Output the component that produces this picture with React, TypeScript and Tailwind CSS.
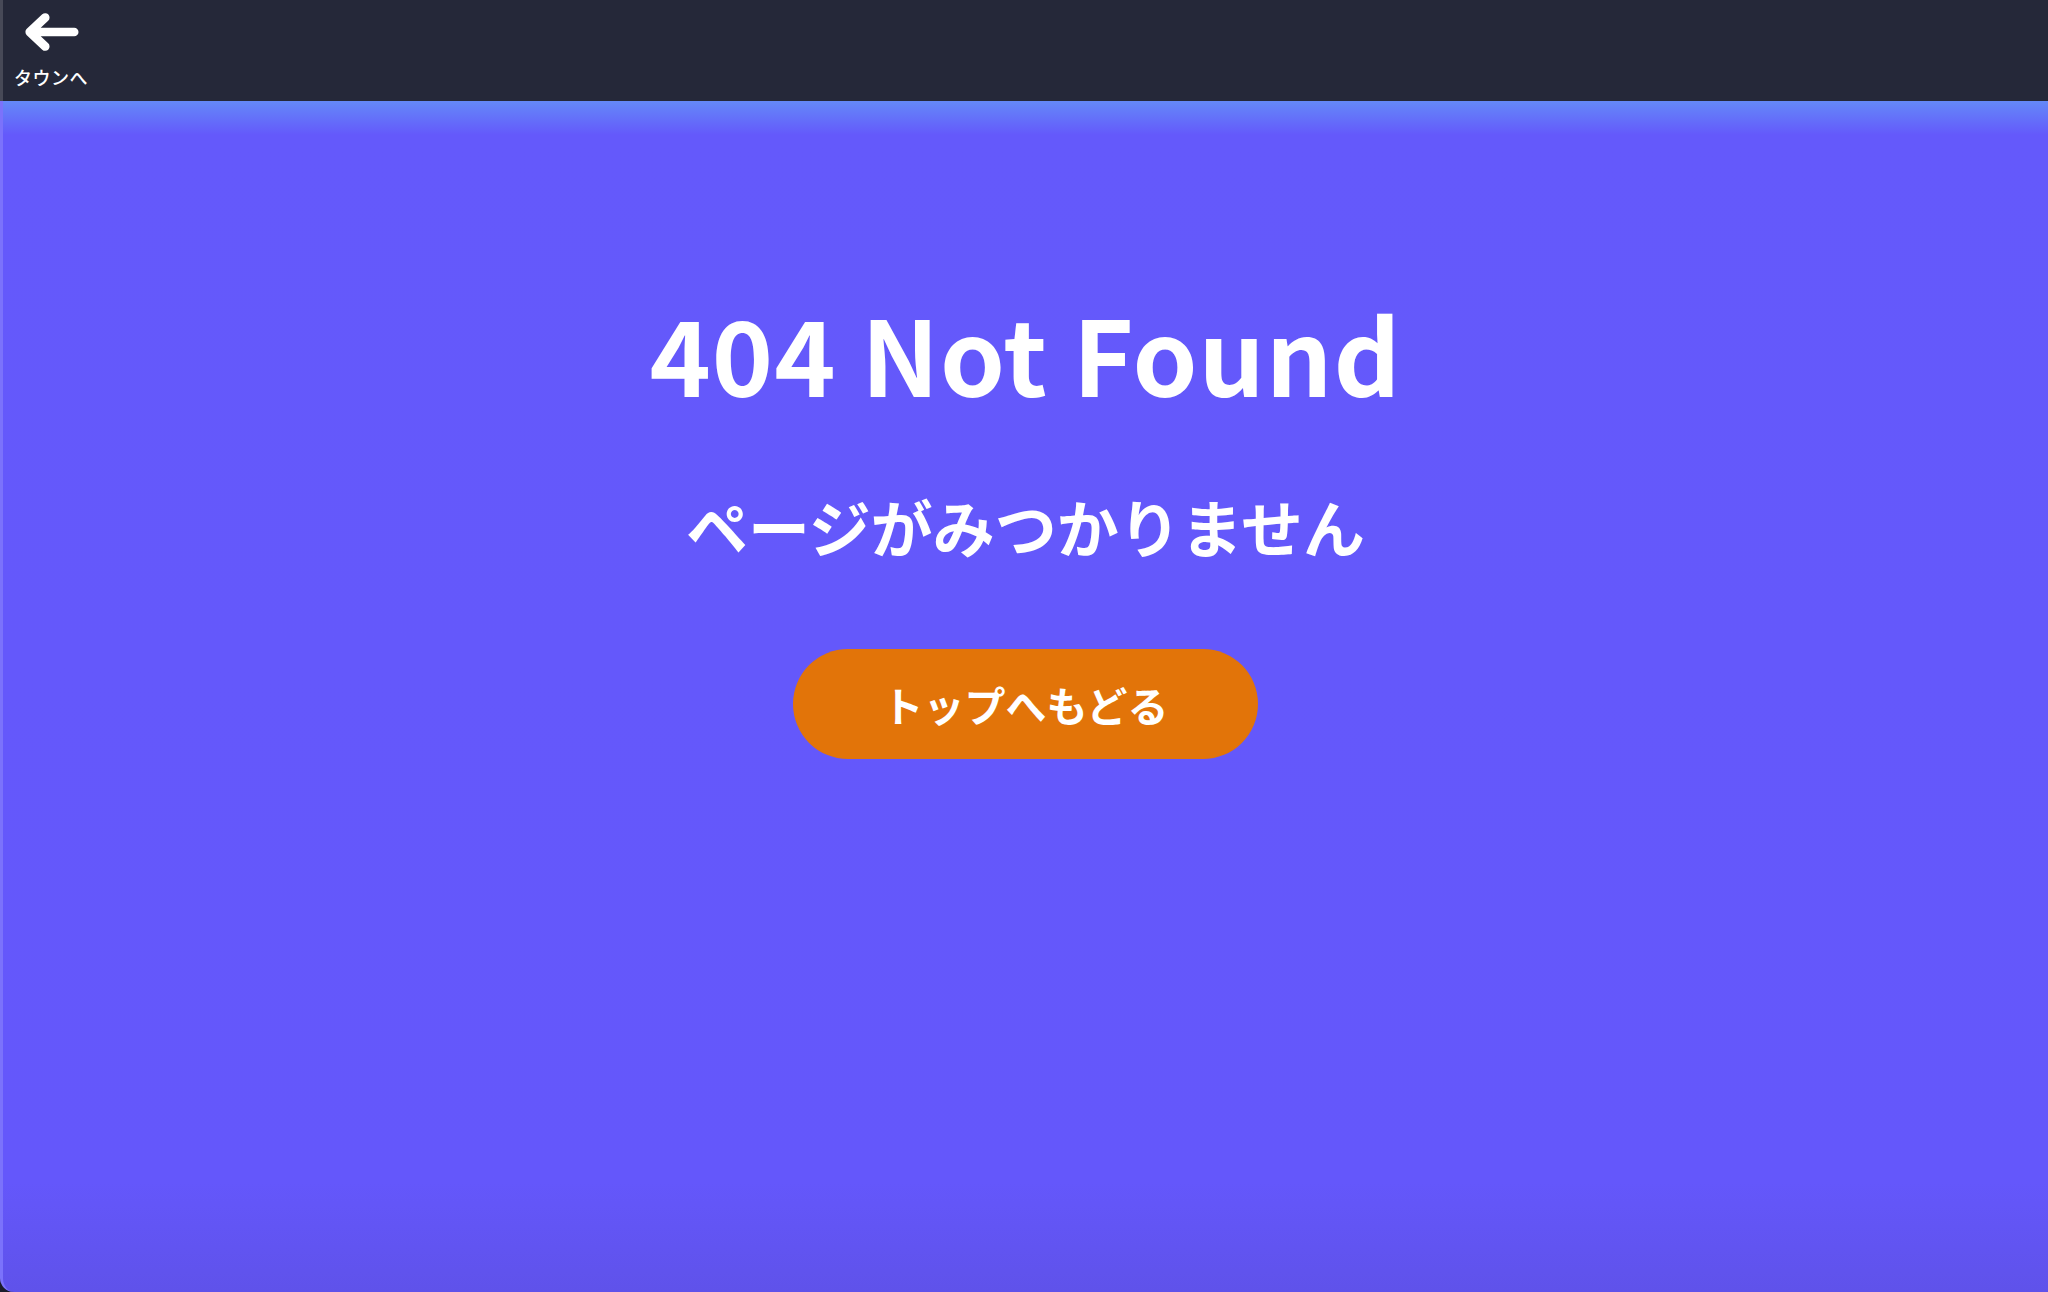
import React from "react";

export default function App() {
  return (
    <div
      className="flex h-[1292px] w-full flex-col overflow-hidden bg-[#1c1c2b]"
      style={{ fontFamily: '"Noto Sans CJK JP", "Noto Sans", sans-serif' }}
    >
      <header className="flex h-[101px] shrink-0 border-l-[3px] border-[#474957] bg-[#252839]">
        <button className="ml-[10px] mt-[11px] flex w-[76px] flex-col items-center text-white">
          <svg width="56" height="42" viewBox="0 0 58 42" fill="none">
            <path
              d="M53 21H8M23 6L7 21L23 36"
              stroke="white"
              strokeWidth="9"
              strokeLinecap="round"
              strokeLinejoin="round"
            />
          </svg>
          <span className="mt-[14px] text-[18px] font-medium leading-[20px] tracking-[0.5px]">
            タウンへ
          </span>
        </button>
      </header>
      <main className="flex flex-1 flex-col items-center rounded-bl-[14px] border-l-[3px] border-[#7b72fb] bg-[linear-gradient(to_bottom,#6489f8_0px,#6459fb_34px,#6457fb_calc(100%_-_110px),#5f52ea_100%)] pt-[196px] text-white">
        <h1 className="text-[104px] font-bold leading-[110px] tracking-[1px]">404 Not Found</h1>
        <p className="mt-[88px] text-[62px] font-bold leading-[62px]">ページがみつかりません</p>
        <button className="mt-[92px] flex h-[110px] w-[465px] items-center justify-center rounded-full bg-[#e27409] text-[41px] font-bold leading-none text-white">
          トップへもどる
        </button>
      </main>
    </div>
  );
}
